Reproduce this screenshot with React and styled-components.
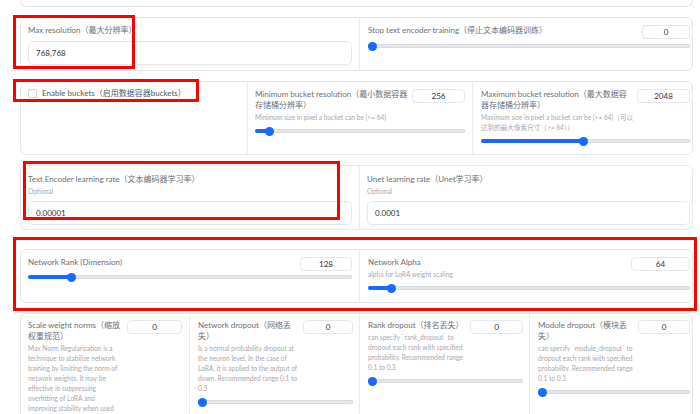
import React from 'react'
import styled, { createGlobalStyle } from 'styled-components'

const GlobalStyle = createGlobalStyle`
  html, body {
    margin: 0;
    padding: 0;
    background: #ffffff;
  }
  body {
    font-family: Lato, 'Noto Sans CJK SC', sans-serif;
  }
`

const Page = styled.div`
  position: relative;
  width: 700px;
  height: 414px;
  overflow: hidden;
  box-sizing: border-box;
  padding: 0 7px 0 20px;
  display: flex;
  flex-direction: column;
`

const TopStub = styled.div`
  flex: none;
  height: 6px;
  border: 1px solid #e5e7eb;
  border-top: none;
  border-radius: 0 0 6px 6px;
`

const Panel = styled.div`
  flex: none;
  box-sizing: border-box;
  margin-top: ${p => p.$gap}px;
  height: ${p => (p.$h ? `${p.$h}px` : 'auto')};
  border: 1px solid #e5e7eb;
  border-radius: 6px;
  background: #e8eaee;
  display: grid;
  grid-template-columns: ${p => p.$cols};
  gap: 1px;
  overflow: hidden;
`

const Cell = styled.div`
  background: #ffffff;
  padding: ${p => p.$pt ?? 7}px ${p => p.$pr ?? 7}px 6px ${p => p.$pl ?? 7}px;
  min-width: 0;
`

const Label = styled.div`
  font-size: 8px;
  line-height: 11px;
  color: #6b6f76;
  max-width: ${p => (p.$max ? `${p.$max}px` : 'none')};
`

const Info = styled.div`
  font-size: 6.6px;
  line-height: 10px;
  color: #a7a9ad;
  margin-top: 1px;
`

const TextBox = styled.div`
  box-sizing: border-box;
  margin-top: ${p => p.$mt ?? 5}px;
  height: 24px;
  border: 1px solid #e5e7eb;
  border-radius: 5px;
  padding: 0 7px;
  display: flex;
  align-items: center;
  font-size: 8px;
  color: #333;
  box-shadow: 0 1px 2px rgba(0, 0, 0, 0.03);
`

const Head = styled.div`
  display: flex;
  align-items: flex-start;
  justify-content: space-between;
  gap: ${p => p.$gap ?? 4}px;
`

const HeadText = styled.div`
  flex: 1;
  min-width: 0;
`

const NumBox = styled.div`
  flex: none;
  box-sizing: border-box;
  width: ${p => p.$w}px;
  height: 14px;
  border: 1px solid #e5e7eb;
  border-radius: 4px;
  display: flex;
  align-items: center;
  justify-content: center;
  font-size: 8px;
  color: #333;
`

const Track = styled.div`
  position: relative;
  height: 10px;
  margin-top: ${p => p.$mt ?? 4}px;
  &::before {
    content: '';
    position: absolute;
    left: 0;
    right: 0;
    top: 3px;
    height: 4px;
    border-radius: 2px;
    background: #e7e7e9;
    box-shadow: inset 0 0 0 1px #d9dadd;
  }
`

const Fill = styled.div`
  position: absolute;
  left: 0;
  top: 3px;
  height: 4px;
  border-radius: 2px;
  background: #1769ff;
`

const Thumb = styled.div`
  position: absolute;
  top: 0.5px;
  width: 9px;
  height: 9px;
  margin-left: -4.5px;
  border-radius: 50%;
  background: #1769ff;
`

const CheckRow = styled.div`
  display: flex;
  align-items: center;
  gap: 5px;
  height: 11px;
  line-height: 11px;
  margin-top: -1px;
  font-size: 8px;
  color: #55585e;
`

const CheckBox = styled.span`
  flex: none;
  box-sizing: border-box;
  width: 9px;
  height: 9px;
  border: 1px solid #cfd2d6;
  border-radius: 2px;
  background: #fff;
`

const Mark = styled.div`
  position: absolute;
  box-sizing: border-box;
  left: ${p => p.$x}px;
  top: ${p => p.$y}px;
  width: ${p => p.$w}px;
  height: ${p => p.$h}px;
  border: 3px solid #ff0000;
  pointer-events: none;
`

function Slider({ p, mt }) {
  const pos = `calc(4.5px + ${p} * (100% - 9px))`
  return (
    <Track $mt={mt}>
      <Fill style={{ width: pos }} />
      <Thumb style={{ left: pos }} />
    </Track>
  )
}

function SliderField({ label, info, value, w, p, mt, gap, labelMax }) {
  return (
    <>
      <Head $gap={gap}>
        <HeadText>
          <Label $max={labelMax}>{label}</Label>
          {info && <Info>{info}</Info>}
        </HeadText>
        <NumBox $w={w}>{value}</NumBox>
      </Head>
      <Slider p={p} mt={mt} />
    </>
  )
}

export default function App() {
  return (
    <Page>
      <GlobalStyle />
      <TopStub />

      <Panel $gap={10} $h={54} $cols="338px 1fr">
        <Cell>
          <Label>Max resolution（最大分辨率）</Label>
          <TextBox>768,768</TextBox>
        </Cell>
        <Cell $pl={8} $pr={2}>
          <SliderField
            label="Stop text encoder training（停止文本编码器训练）"
            value="0"
            w={48}
            p={0}
            mt={2}
          />
        </Cell>
      </Panel>

      <Panel $gap={10} $h={74} $cols="226px 224px 1fr">
        <Cell>
          <CheckRow>
            <CheckBox />
            <span>Enable buckets（启用数据容器buckets）</span>
          </CheckRow>
        </Cell>
        <Cell>
          <SliderField
            label="Minimum bucket resolution（最小数据容器存储桶分辨率）"
            info="Minimum size in pixel a bucket can be (>= 64)"
            value="256"
            w={53}
            p={0.048}
          />
        </Cell>
        <Cell $pl={8} $pr={2}>
          <SliderField
            label="Maximum bucket resolution（最大数据容器存储桶分辨率）"
            info="Maximum size in pixel a bucket can be (>= 64)（可以达到的最大像素尺寸（>= 64））"
            value="2048"
            w={53}
            p={0.492}
            gap={3}
          />
        </Cell>
      </Panel>

      <Panel $gap={10} $h={65} $cols="338px 1fr">
        <Cell $pt={8}>
          <Label>Text Encoder learning rate（文本编码器学习率）</Label>
          <Info>Optional</Info>
          <TextBox>0.00001</TextBox>
        </Cell>
        <Cell $pt={8} $pl={7} $pr={2}>
          <Label>Unet learning rate（Unet学习率）</Label>
          <Info>Optional</Info>
          <TextBox>0.0001</TextBox>
        </Cell>
      </Panel>

      <Panel $gap={19} $h={54} $cols="338px 1fr">
        <Cell $pt={7}>
          <SliderField
            label="Network Rank (Dimension)"
            value="128"
            w={52}
            p={0.124}
            mt={1}
          />
        </Cell>
        <Cell $pt={7} $pl={8} $pr={2}>
          <SliderField
            label="Network Alpha"
            info="alpha for LoRA weight scaling"
            value="64"
            w={59}
            p={0.0616}
          />
        </Cell>
      </Panel>

      <Panel $gap={10} $cols="168px 169px 169px 1fr">
        <Cell $pt={6}>
          <SliderField
            label="Scale weight norms（缩放权重规范）"
            info="Max Norm Regularization is a technique to stabilize network training by limiting the norm of network weights. It may be effective in suppressing overfitting of LoRA and improving stability when used with other LoRAs. See PR #545 on kohya_ss/sd_scripts repo for details. Recommended setting: 1. Higher is weaker, lower is stronger."
            value="0"
            w={55}
            p={0}
          />
        </Cell>
        <Cell $pt={6} $pl={8} $pr={6}>
          <SliderField
            label="Network dropout（网络丢失）"
            info="Is a normal probability dropout at the neuron level. In the case of LoRA, it is applied to the output of down. Recommended range 0.1 to 0.5"
            value="0"
            w={50}
            p={0}
            gap={0}
            labelMax={98}
          />
        </Cell>
        <Cell $pt={6} $pl={8} $pr={6}>
          <SliderField
            label="Rank dropout（排名丢失）"
            info="can specify `rank_dropout` to dropout each rank with specified probability. Recommended range 0.1 to 0.3"
            value="0"
            w={53}
            p={0}
            gap={2}
          />
        </Cell>
        <Cell $pt={6} $pl={8} $pr={2}>
          <SliderField
            label="Module dropout（模块丢失）"
            info="can specify `module_dropout` to dropout each rank with specified probability. Recommended range 0.1 to 0.3"
            value="0"
            w={52}
            p={0}
            gap={2}
          />
        </Cell>
      </Panel>

      <Mark $x={13} $y={15} $w={122} $h={54} />
      <Mark $x={13} $y={79} $w={186} $h={23} />
      <Mark $x={23} $y={161} $w={317} $h={59} />
      <Mark $x={13} $y={237} $w={684} $h={74} />
    </Page>
  )
}
